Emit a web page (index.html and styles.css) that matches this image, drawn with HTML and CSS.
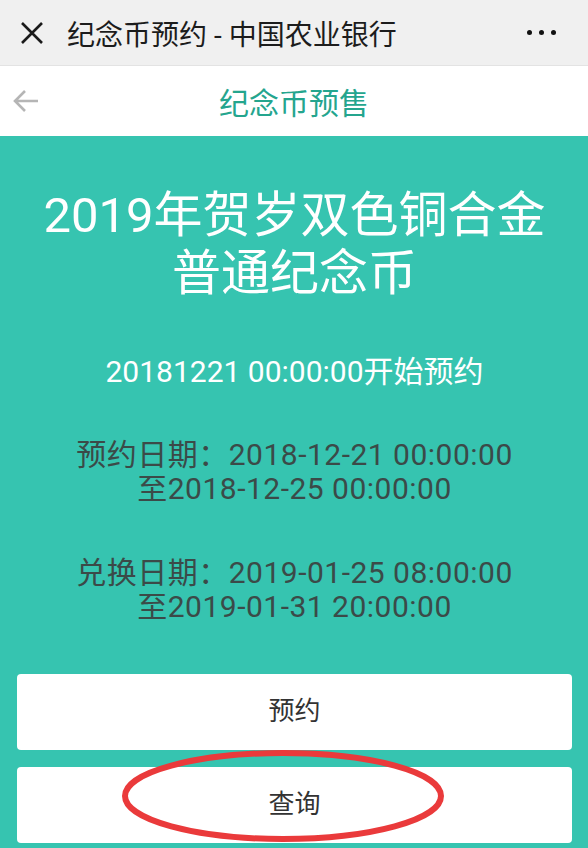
FILE: index.html
```html
<!DOCTYPE html>
<html lang="zh-CN">
<head>
    <meta charset="UTF-8">
    <meta name="viewport" content="width=device-width, initial-scale=1.0">
    <title>纪念币预约 - 中国农业银行</title>
    <link rel="stylesheet" href="styles.css">
</head>
<body>

    <!-- WeChat style browser bar -->
    <div class="top-bar">
        <svg class="close-icon" width="24" height="24" viewBox="0 0 24 24">
            <path d="M2 2 L22 22 M22 2 L2 22" stroke="#1a1a1a" stroke-width="2.6" fill="none"/>
        </svg>
        <span class="top-title">纪念币预约 - 中国农业银行</span>
        <span class="more-dots"><i></i><i></i><i></i></span>
    </div>

    <!-- Page header -->
    <div class="nav-bar">
        <svg class="back-icon" width="28" height="24" viewBox="0 0 28 24">
            <path d="M26 12 H3 M13 2 L3 12 L13 22" stroke="#b5b5b5" stroke-width="2.6" fill="none"/>
        </svg>
        <h1 class="nav-title">纪念币预售</h1>
        <span></span>
    </div>

    <!-- Main content -->
    <div class="coin-panel">
        <h2 class="coin-name">2019年贺岁双色铜合金<br>普通纪念币</h2>
        <p class="start-time">20181221 00:00:00开始预约</p>

        <p class="date-info">预约日期：2018-12-21 00:00:00<br>至2018-12-25 00:00:00</p>
        <p class="date-info">兑换日期：2019-01-25 08:00:00<br>至2019-01-31 20:00:00</p>

        <div class="actions">
            <button class="action-btn">预约</button>
            <button class="action-btn">查询</button>
            <!-- hand drawn red circle from the screenshot -->
            <svg class="mark" width="330" height="100" viewBox="0 0 330 100">
                <ellipse cx="164" cy="48" rx="158" ry="43" stroke="#ea3a3b" stroke-width="6" fill="none"/>
            </svg>
        </div>
    </div>

</body>
</html>
```

FILE: styles.css
```css
/* General page styling */
body {
    margin: 0;
    height: 848px;
    overflow: hidden;
    font-family: Roboto, "Noto Sans CJK SC", sans-serif;
    background-color: #36c4b0;
}

/* --- Browser bar --- */
.top-bar {
    height: 65px;
    display: flex;
    align-items: center;
    padding: 0 0 0 20px;
    background-color: #f0f0f0;
    border-bottom: 1px solid #e3e3e3;
}

.close-icon {
    flex: none;
}

.top-title {
    margin-left: 23px;
    font-size: 28px;
    color: #1c1c1c;
    flex: 1;
}

.more-dots {
    display: flex;
    gap: 7px;
    margin-right: 32px;
}

.more-dots i {
    width: 5px;
    height: 5px;
    border-radius: 50%;
    background: #111;
}

/* --- Page header --- */
.nav-bar {
    height: 70px;
    display: grid;
    grid-template-columns: 60px 1fr 60px;
    align-items: center;
    background-color: #fff;
}

.back-icon {
    margin-left: 12px;
}

.nav-title {
    margin: 0;
    text-align: center;
    font-size: 30px;
    font-weight: normal;
    color: #24a58e;
}

/* --- Coin info --- */
.coin-panel {
    padding: 51px 16px 0 17px;
    text-align: center;
}

.coin-name {
    margin: 0;
    font-size: 49px;
    line-height: 58px;
    font-weight: normal;
    color: #fff;
}

.start-time {
    margin: 51px 0 0;
    font-size: 30px;
    line-height: 36px;
    color: #fff;
}

.date-info {
    margin: 48px 0 0;
    font-size: 30px;
    line-height: 34px;
    letter-spacing: 0.5px;
    color: #3b4a48;
}

.date-info + .date-info {
    margin-top: 50px;
}

/* --- Buttons --- */
.actions {
    position: relative;
    margin-top: 50px;
    display: flex;
    flex-direction: column;
    gap: 17px;
}

.action-btn {
    height: 76px;
    padding: 0 0 7px;
    border: none;
    border-radius: 4px;
    background-color: #fff;
    font-family: Roboto, "Noto Sans CJK SC", sans-serif;
    font-size: 26px;
    color: #333;
}

.mark {
    position: absolute;
    left: 102px;
    top: 74px;
}
```
